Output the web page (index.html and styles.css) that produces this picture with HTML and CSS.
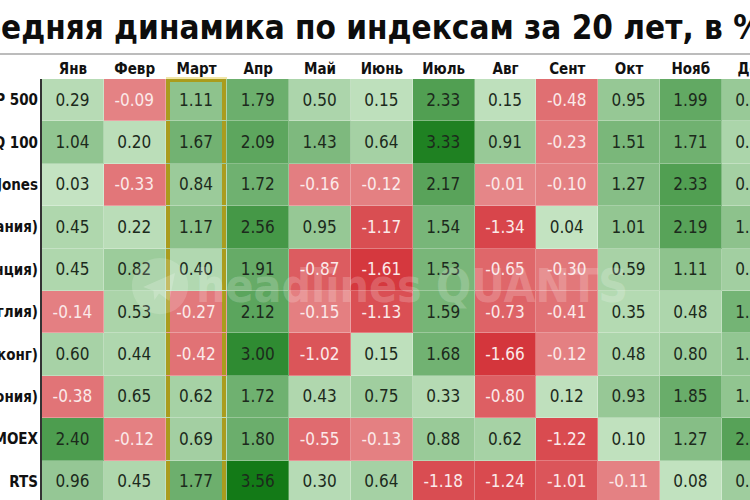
FILE: index.html
```html
<!DOCTYPE html>
<html lang="ru">
<head>
<meta charset="utf-8">
<title>Средняя динамика по индексам за 20 лет</title>
<link rel="stylesheet" href="styles.css">
</head>
<body>
<div class="page">
  <h1 class="title"><span class="title-text">Средняя динамика по индексам за 20 лет, в %</span></h1>
  <div class="table" id="table">
    <div class="head"></div>
    <div class="head">Янв</div>
    <div class="head">Февр</div>
    <div class="head">Март</div>
    <div class="head">Апр</div>
    <div class="head">Май</div>
    <div class="head">Июнь</div>
    <div class="head">Июль</div>
    <div class="head">Авг</div>
    <div class="head">Сент</div>
    <div class="head">Окт</div>
    <div class="head">Нояб</div>
    <div class="head">Дек</div>
  </div>
  <div class="watermark">
    <svg class="wm-icon" viewBox="0 0 64 64" width="60" height="60">
      <circle cx="32" cy="32" r="30" fill="#ffffff" fill-opacity="0.16"/>
      <path d="M14 33 L48 18 L42 48 L31 40 L26 47 L25 37 Z" fill="#ffffff" fill-opacity="0.2"/>
    </svg>
    <span class="wm-text">headlines QUANTS</span>
  </div>
</div>
<script src="script.js"></script>
</body>
</html>
```

FILE: styles.css
```css
html, body {
  margin: 0;
  padding: 0;
  background: #ffffff;
}
.page {
  position: relative;
  width: 750px;
  height: 500px;
  overflow: hidden;
  background: #ffffff;
  font-family: "DejaVu Sans Condensed", "DejaVu Sans", sans-serif;
  color: #111;
}
.title {
  margin: 0;
  height: 53px;
  line-height: 56px;
  font-size: 33px;
  font-weight: 700;
  white-space: nowrap;
  overflow: hidden;
  color: #0d0d0d;
  border-bottom: 2px solid #bcbcbc;
}
.title-text {
  display: inline-block;
  margin-left: -42px;
}
.table {
  display: grid;
  grid-template-columns: 42px repeat(12, 61.8px);
  grid-template-rows: 24px repeat(10, 42.4px);
}
.head {
  padding-top: 4px;
  line-height: 20px;
  font-size: 15px;
  font-weight: 700;
  text-align: center;
  white-space: nowrap;
  color: #111;
}
.label {
  display: flex;
  justify-content: flex-end;
  align-items: center;
  overflow: hidden;
  white-space: nowrap;
  padding-right: 2px;
  border-right: 2px solid #333;
  font-size: 15px;
  font-weight: 700;
  color: #111;
}
.cell {
  display: flex;
  align-items: center;
  justify-content: center;
  font-size: 17px;
  white-space: nowrap;
  border-right: 1px solid rgba(255, 255, 255, 0.28);
  border-bottom: 1px solid rgba(255, 255, 255, 0.28);
  color: #1c2a1c;
}
.cell.neg {
  color: #fbe9e9;
}
.cell.hl {
  box-shadow: inset 4px 0 0 #aa9c1e, inset -4px 0 0 #aa9c1e;
}
.cell.hl.first {
  box-shadow: inset 4px 0 0 #aa9c1e, inset -4px 0 0 #aa9c1e, inset 0 3px 0 #aa9c1e, 0 -2px 0 #f1e6a8;
}
.watermark {
  position: absolute;
  left: 130px;
  top: 256px;
  display: flex;
  align-items: center;
  gap: 6px;
  pointer-events: none;
}
.wm-text {
  font-family: "DejaVu Sans Condensed", "DejaVu Sans", sans-serif;
  font-weight: 700;
  font-size: 46px;
  color: rgba(255, 255, 255, 0.2);
  white-space: nowrap;
}
```

FILE: script.js
```js
(function () {
  var rows = [
    ["S&P 500", [0.29, -0.09, 1.11, 1.79, 0.50, 0.15, 2.33, 0.15, -0.48, 0.95, 1.99, 0.91]],
    ["NASDAQ 100", [1.04, 0.20, 1.67, 2.09, 1.43, 0.64, 3.33, 0.91, -0.23, 1.51, 1.71, 0.52]],
    ["Dow Jones", [0.03, -0.33, 0.84, 1.72, -0.16, -0.12, 2.17, -0.01, -0.10, 1.27, 2.33, 0.67]],
    ["DAX (Германия)", [0.45, 0.22, 1.17, 2.56, 0.95, -1.17, 1.54, -1.34, 0.04, 1.01, 2.19, 1.13]],
    ["CAC 40 (Франция)", [0.45, 0.82, 0.40, 1.91, -0.87, -1.61, 1.53, -0.65, -0.30, 0.59, 1.11, 0.71]],
    ["FTSE 100 (Англия)", [-0.14, 0.53, -0.27, 2.12, -0.15, -1.13, 1.59, -0.73, -0.41, 0.35, 0.48, 1.62]],
    ["Hang Seng (Гонконг)", [0.60, 0.44, -0.42, 3.00, -1.02, 0.15, 1.68, -1.66, -0.12, 0.48, 0.80, 1.02]],
    ["Nikkei 225 (Япония)", [-0.38, 0.65, 0.62, 1.72, 0.43, 0.75, 0.33, -0.80, 0.12, 0.93, 1.85, 1.05]],
    ["MOEX", [2.40, -0.12, 0.69, 1.80, -0.55, -0.13, 0.88, 0.62, -1.22, 0.10, 1.27, 2.21]],
    ["RTS", [0.96, 0.45, 1.77, 3.56, 0.30, 0.64, -1.18, -1.24, -1.01, -0.11, 0.08, 0.77]]
  ];
  function mix(a, b, t) {
    return a.map(function (x, i) { return Math.round(x + (b[i] - x) * t); });
  }
  function color(v) {
    var c;
    if (v >= 0) {
      c = mix([197, 228, 195], [19, 122, 23], Math.min(v / 3.56, 1));
    } else {
      c = mix([229, 134, 136], [212, 52, 58], Math.min(-v / 1.7, 1));
    }
    return "rgb(" + c.join(",") + ")";
  }
  var table = document.getElementById("table");
  rows.forEach(function (row, r) {
    var label = document.createElement("div");
    label.className = "label";
    var span = document.createElement("span");
    span.textContent = row[0];
    label.appendChild(span);
    table.appendChild(label);
    row[1].forEach(function (v, c) {
      var cell = document.createElement("div");
      var cls = "cell";
      if (v < 0) cls += " neg";
      if (c === 2) cls += " hl";
      if (c === 2 && r === 0) cls += " first";
      cell.className = cls;
      cell.style.backgroundColor = color(v);
      cell.textContent = v.toFixed(2);
      table.appendChild(cell);
    });
  });
})();
```
